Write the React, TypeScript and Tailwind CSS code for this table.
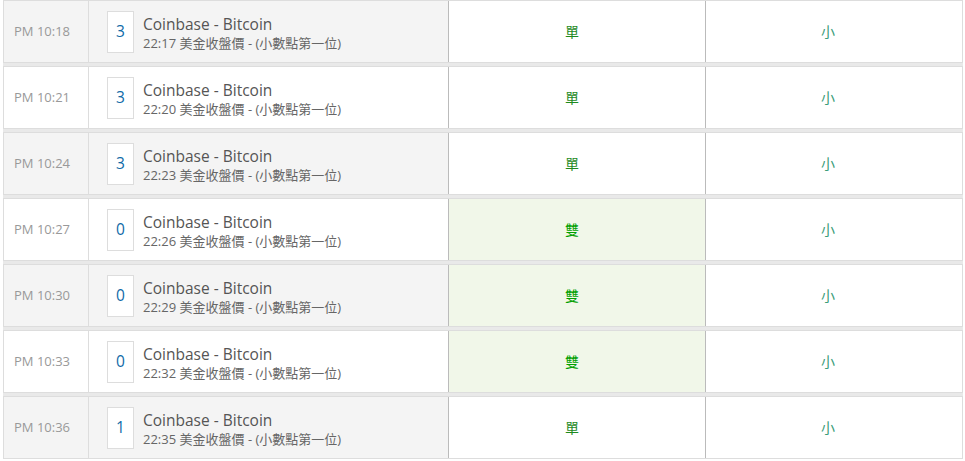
const rows = [
  { time: 'PM 10:18', num: '3', at: '22:17', odd: true },
  { time: 'PM 10:21', num: '3', at: '22:20', odd: false },
  { time: 'PM 10:24', num: '3', at: '22:23', odd: true },
  { time: 'PM 10:27', num: '0', at: '22:26', odd: false },
  { time: 'PM 10:30', num: '0', at: '22:29', odd: true },
  { time: 'PM 10:33', num: '0', at: '22:32', odd: false },
  { time: 'PM 10:36', num: '1', at: '22:35', odd: true },
];

function isEven(n: string) {
  return Number(n) % 2 === 0;
}

export default function App() {
  return (
    <div
      className="w-[965px] h-[461px] bg-white pl-[3px] overflow-hidden"
      style={{ fontFamily: '"Open Sans", "Noto Sans CJK TC", sans-serif' }}
    >
      <div className="w-[960px] bg-[#e9e9e9] flex flex-col gap-[3px]">
        {rows.map((r) => {
          const even = isEven(r.num);
          return (
            <div key={r.time} className="flex h-[63px] border border-[#dddddd]">
              {/* time */}
              <div
                className={`w-[85px] flex items-center pl-[10px] border-r border-[#dddddd] text-[13px] text-[#999999] ${
                  r.odd ? 'bg-[#f4f4f4]' : 'bg-white'
                }`}
              >
                {r.time}
              </div>

              {/* game card */}
              <div
                className={`w-[360px] flex items-center pl-[18px] border-r border-[#bbbbbb] ${
                  r.odd ? 'bg-[#f4f4f4]' : 'bg-white'
                }`}
              >
                <div className="w-[27px] h-[42px] bg-white border border-[#dddddd] flex items-center justify-center text-[15.5px] text-[#0f6aa8]">
                  {r.num}
                </div>
                <div className="ml-[9px] flex flex-col">
                  <span className="mt-[2px] text-[15.5px] leading-[20px] text-[#555555]">Coinbase - Bitcoin</span>
                  <span className="text-[13px] leading-[18px] text-[#666666]">
                    {r.at} 美金收盤價 - (小數點第一位)
                  </span>
                </div>
              </div>

              {/* odd / even */}
              <div
                className={`w-[257px] flex items-center justify-center pr-[10px] border-r border-[#bbbbbb] text-[14px] ${
                  even ? 'bg-[#f1f7e9] text-[#00a000]' : 'bg-white text-[#1e8a1e]'
                }`}
              >
                {even ? '雙' : '單'}
              </div>

              {/* big / small */}
              <div className="flex-1 flex items-center justify-center pr-[12px] bg-white text-[14px] text-[#3a9c78]">
                小
              </div>
            </div>
          );
        })}
      </div>
    </div>
  );
}
